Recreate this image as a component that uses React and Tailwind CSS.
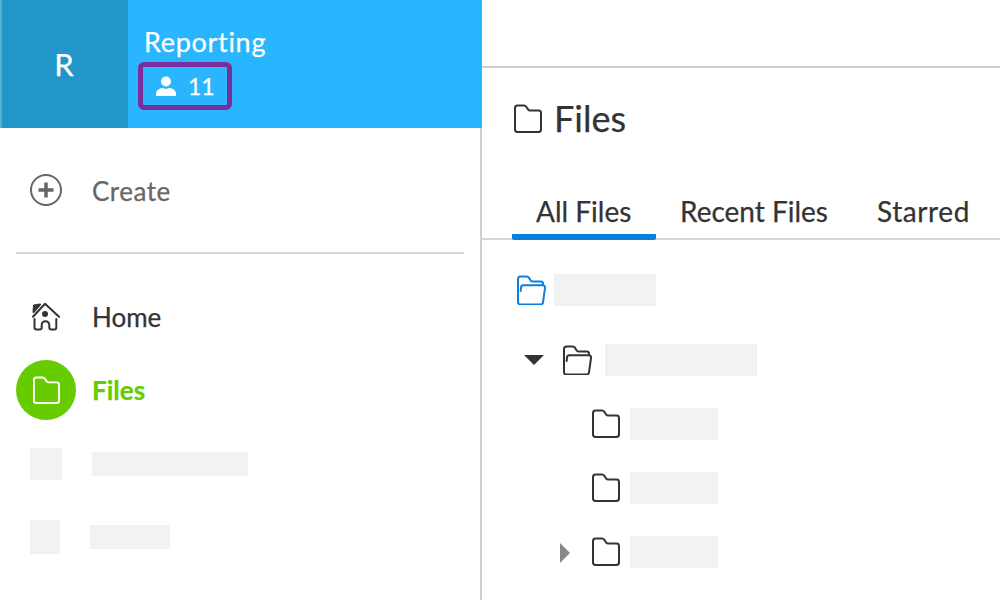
const Folder = ({ className = '' }) => (
  <svg viewBox="0 0 30 30" fill="none" stroke="currentColor" strokeWidth="2" strokeLinejoin="round" className={className}>
    <path d="M4.500 1.500h6.500c1 0 1.600.4 2.200 1.200l2 2.900c.5.7 1 1 2 1h8.300c1.500 0 2.500 1 2.500 2.400v16.500c0 1.400-1 2.400-2.500 2.400H4.500c-1.500 0-2.500-1-2.500-2.400V4c0-1.500 1-2.500 2.500-2.500z" />
  </svg>
)

const OpenFolder = ({ className = '' }) => (
  <svg viewBox="0 0 30 30" fill="none" stroke="currentColor" strokeWidth="2" strokeLinejoin="round" strokeLinecap="round" className={className}>
    <path d="M27 10V8.800c0-1.300-.9-2.200-2.300-2.200H16.800c-1 0-1.500-.3-2-1L12.900 2.700C12.300 1.900 11.700 1.500 10.700 1.500H4.500C3 1.500 2 2.500 2 4v23c0 1.400 1 2.500 2.500 2.500h20c1.400 0 2.300-.8 2.500-2.200L29 13c.2-1.700-.8-2.800-2.400-2.800H7.500c-1.500 0-2.400.9-2.500 2.300L4.700 16" />
  </svg>
)

const Placeholder = ({ className = '' }) => <div className={`bg-[#f2f2f2] ${className}`} />

const tabs = ['All Files', 'Recent Files', 'Starred']

const App = () => {
  return (
    <div className="flex h-[600px] w-[1000px] overflow-hidden bg-white font-['Lato',sans-serif] text-[#333] [-webkit-text-stroke-width:0.25px]">
      <aside className="flex w-[482px] shrink-0 flex-col border-r-2 border-[#cfcfcf]">
        <header className="-mr-[2px] flex h-[128px] shrink-0 bg-[#29b6ff]">
          <div className="flex w-[128px] shrink-0 items-center justify-center border-l-2 border-[#5cadd6] bg-[#2196c9] pr-[2px] text-[31px] text-white">
            R
          </div>
          <div className="flex flex-col pl-[10px] pt-[25px]">
            <div className="pl-[6px] text-[27px] leading-[34px] tracking-[0.7px] text-white">Reporting</div>
            <div className="mt-[3px] flex h-[48px] w-[94px] items-center rounded-[6px] border-[5px] border-[#7b2d9e] pl-[13px] text-white">
              <svg viewBox="0 0 20 20" fill="currentColor" className="h-[20px] w-[20px]">
                <circle cx="10" cy="5.500" r="5" />
                <path d="M0 20v-2.500c0-3 3.500-5.500 6.500-5.500 1 1 5.500 1 7 0 3 0 6.500 2.500 6.500 5.500V20z" />
              </svg>
              <span className="ml-[12px] text-[23px] leading-none">11</span>
            </div>
          </div>
        </header>

        <div className="flex h-[126px] shrink-0 flex-col px-[16px]">
          <div className="flex h-[126px] items-center border-b-2 border-[#d6d6d6]">
            <svg viewBox="0 0 32 32" fill="none" className="ml-[14px] h-[32px] w-[32px] text-[#666]" stroke="currentColor">
              <circle cx="16" cy="16" r="15" strokeWidth="2" />
              <path d="M16 8.500v15M8.500 16h15" strokeWidth="3.500" />
            </svg>
            <span className="ml-[30px] mt-[2px] text-[26px] tracking-[0.5px] text-[#666]">Create</span>
          </div>
        </div>

        <nav className="flex flex-col px-[16px] pt-[31px]">
          <div className="flex h-[64px] items-center">
            <svg viewBox="0 0 30 30" fill="none" stroke="#333" strokeWidth="2" strokeLinecap="round" strokeLinejoin="round" className="ml-[14px] h-[30px] w-[30px]">
              <path d="M3 14.700 15 1.800 29 14.700" />
              <path d="M3.500 10 4 3.500 10 2.500z" fill="#333" />
              <circle cx="15" cy="12" r="3" fill="#333" stroke="none" />
              <path d="M4.500 17v8.500a2 2 0 0 0 2 2h3.200a2 2 0 0 0 2-2V23a3.800 3.800 0 0 1 7.600 0v2.500a2 2 0 0 0 2 2h3a2 2 0 0 0 2-2V17" />
            </svg>
            <span className="ml-[32px] text-[26px]">Home</span>
          </div>
          <div className="mt-[11px] flex h-[60px] items-center">
            <div className="flex h-[60px] w-[60px] items-center justify-center rounded-full bg-[#66cc00] text-white">
              <Folder className="h-[29px] w-[29px]" />
            </div>
            <span className="ml-[16px] text-[26px] font-bold text-[#66cc00]">Files</span>
          </div>
          <div className="mt-[28px] flex items-center pl-[14px]">
            <Placeholder className="h-[32px] w-[32px]" />
            <Placeholder className="ml-[30px] h-[24px] w-[156px]" />
          </div>
          <div className="mt-[40px] flex items-center pl-[14px]">
            <Placeholder className="h-[34px] w-[30px]" />
            <Placeholder className="ml-[30px] h-[24px] w-[80px]" />
          </div>
        </nav>
      </aside>

      <main className="flex min-w-0 flex-1 flex-col">
        <div className="h-[68px] shrink-0 border-b-2 border-[#cfcfcf]" />
        <div className="flex h-[75px] shrink-0 items-center pl-[31px] pt-[27px] text-[#333]">
          <Folder className="h-[30px] w-[30px]" />
          <h1 className="ml-[11px] -mt-[2px] text-[36px] leading-[48px]">Files</h1>
        </div>
        <div className="mt-[49px] flex h-[48px] shrink-0 border-b-2 border-[#d6d6d6] pl-[30px]">
          {tabs.map((tab, index) => (
            <div
              key={tab}
              className={`-mb-[2px] h-[48px] text-[28px] leading-[38px] whitespace-nowrap ${
                index === 0
                  ? 'w-[144px] rounded-[2px] border-b-[6px] border-[#0b7fe0] pl-[24px]'
                  : index === 1
                    ? 'ml-[24px] w-[172px]'
                    : 'ml-[25px] tracking-[0.6px]'
              }`}
            >
              {tab}
            </div>
          ))}
        </div>

        <div className="flex flex-col pl-[34px] pt-[34px]">
          <div className="flex items-center">
            <OpenFolder className="h-[30px] w-[30px] text-[#0b7fe0]" />
            <Placeholder className="ml-[8px] h-[32px] w-[102px]" />
          </div>
          <div className="mt-[38px] flex items-center pl-[8px]">
            <div className="h-0 w-0 border-x-[10px] border-t-[10px] border-x-transparent border-t-[#333]" />
            <OpenFolder className="ml-[18px] h-[30px] w-[30px] text-[#333]" />
            <Placeholder className="ml-[13px] h-[32px] w-[152px]" />
          </div>
          <div className="mt-[32px] flex items-center pl-[75px]">
            <Folder className="h-[30px] w-[30px]" />
            <Placeholder className="ml-[9px] h-[32px] w-[88px]" />
          </div>
          <div className="mt-[32px] flex items-center pl-[75px]">
            <Folder className="h-[30px] w-[30px]" />
            <Placeholder className="ml-[9px] h-[32px] w-[88px]" />
          </div>
          <div className="relative mt-[32px] flex items-center pl-[75px]">
            <div className="absolute left-[44px] top-[7px] h-0 w-0 border-y-[10px] border-l-[10px] border-y-transparent border-l-[#888]" />
            <Folder className="h-[30px] w-[30px]" />
            <Placeholder className="ml-[9px] h-[32px] w-[88px]" />
          </div>
        </div>
      </main>
    </div>
  )
}

export default App
